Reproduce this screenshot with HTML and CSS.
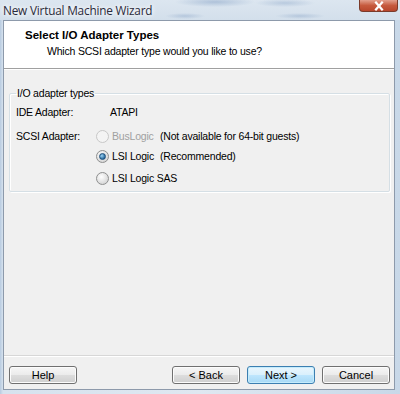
FILE: index.html
```
<!DOCTYPE html>
<html lang="en">
<head>
    <meta charset="UTF-8">
    <title>New Virtual Machine Wizard</title>
    <link rel="stylesheet" href="styles.css">
</head>
<body>
    <div class="window">
        <div class="titlebar">
            <span class="title">New Virtual Machine Wizard</span>
            <span class="close-btn">
                <svg width="14" height="10" viewBox="0 0 14 10">
                    <path d="M4 1.5 L10 8.5 M10 1.5 L4 8.5" stroke="#fff" stroke-width="2.2" stroke-linecap="square"/>
                </svg>
            </span>
        </div>

        <div class="client">
            <div class="header">
                <div class="header-title">Select I/O Adapter Types</div>
                <div class="header-sub">Which SCSI adapter type would you like to use?</div>
            </div>

            <fieldset class="group">
                <legend>I/O adapter types</legend>
                <div class="row">
                    <span class="label">IDE Adapter:</span>
                    <span>ATAPI</span>
                </div>
                <div class="row">
                    <span class="label">SCSI Adapter:</span>
                    <div class="options">
                        <div class="option disabled">
                            <span class="radio"></span>
                            <span class="opt-name">BusLogic</span>
                            <span class="note">(Not available for 64-bit guests)</span>
                        </div>
                        <div class="option">
                            <span class="radio checked"></span>
                            <span class="opt-name">LSI Logic</span>
                            <span class="note">(Recommended)</span>
                        </div>
                        <div class="option">
                            <span class="radio"></span>
                            <span class="opt-name">LSI Logic SAS</span>
                        </div>
                    </div>
                </div>
            </fieldset>

            <div class="spacer"></div>

            <div class="footer">
                <button class="btn">Help</button>
                <div class="footer-right">
                    <button class="btn">&lt; Back</button>
                    <button class="btn default">Next &gt;</button>
                    <button class="btn">Cancel</button>
                </div>
            </div>
        </div>
    </div>
</body>
</html>
```
FILE: styles.css
```
body {
    margin: 0;
    background: #c9d8e8;
    font-family: "Liberation Sans", Arial, sans-serif;
    font-size: 10.5px;
    letter-spacing: -0.2px;
    color: #000;
}

.window {
    width: 400px;
    height: 394px;
    display: flex;
    flex-direction: column;
    background: linear-gradient(to right, #b8cbe0 0px, #d6e2ee 3px, #dfe8f1 50%, #c8d8e8 100%);
}

.titlebar {
    height: 20px;
    display: flex;
    justify-content: space-between;
    align-items: flex-start;
    background:
        radial-gradient(ellipse 40px 5px at 215px 2px, rgba(120, 150, 190, 0.45), transparent),
        radial-gradient(ellipse 30px 4px at 285px 3px, rgba(120, 150, 190, 0.35), transparent),
        radial-gradient(ellipse 20px 3px at 185px 16px, rgba(120, 150, 190, 0.35), transparent),
        radial-gradient(ellipse 25px 3px at 300px 16px, rgba(120, 150, 190, 0.35), transparent),
        linear-gradient(to bottom, #dce6f0, #d3dfeb);
}
.title {
    font-family: "Open Sans", "Noto Sans", sans-serif;
    font-size: 11.8px;
    color: #2a2a3a;
    padding: 1px 0 0 3px;
    line-height: 18px;
    text-shadow: 0 0 6px #fff, 0 0 4px #fff;
}
.close-btn {
    width: 37px;
    height: 11px;
    margin-right: 2px;
    background: linear-gradient(to bottom, #e3a08e, #c65a3e 50%, #b8462c);
    border: 1px solid #7a3a2a;
    border-top: none;
    border-radius: 0 0 4px 4px;
    display: flex;
    justify-content: center;
    align-items: center;
}

.client {
    flex: 1;
    margin: 0 5px 4px 3px;
    background: #f0f0f0;
    border: 1px solid #8d9aab;
    display: flex;
    flex-direction: column;
}

.header {
    background: #fff;
    height: 48px;
    border-bottom: 1px solid #a0a0a0;
    box-shadow: 0 1px 0 #fff;
    padding: 7px 0 0 21px;
    box-sizing: border-box;
}
.header-title {
    font-weight: bold;
    font-size: 11.5px;
    letter-spacing: 0;
    line-height: 14px;
}
.header-sub {
    padding-left: 22px;
    margin-top: 2px;
    line-height: 14px;
}

.group {
    margin: 18px 4px 0 5px;
    padding: 6px 6px 6px 6px;
    border: 1px solid #d5dfe5;
    box-shadow: inset 1px 1px 0 #fff, 1px 1px 0 #fff;
    border-radius: 2px;
}
.group legend {
    padding: 0 1px;
    margin-left: 0;
}

.row {
    display: flex;
    line-height: 14px;
    white-space: nowrap;
}
.row + .row {
    margin-top: 10px;
}
.label {
    width: 94px;
    flex-shrink: 0;
}

.options {
    display: flex;
    flex-direction: column;
    gap: 6px;
    margin-left: -14px;
}
.option {
    display: flex;
    align-items: center;
    height: 14px;
}
.option + .option + .option {
    margin-top: 2px;
}
.opt-name {
    min-width: 48px;
    margin-left: 3px;
}
.option.disabled .opt-name {
    color: #a0a0a0;
}

.radio {
    width: 11px;
    height: 11px;
    flex-shrink: 0;
    border-radius: 50%;
    border: 1px solid #8e8f8f;
    background: radial-gradient(circle at 40% 35%, #fff, #d4d4d4 80%);
    display: flex;
    justify-content: center;
    align-items: center;
}
.radio.checked::after {
    content: "";
    width: 5px;
    height: 5px;
    border-radius: 50%;
    background: radial-gradient(circle at 35% 35%, #9ad2f5, #1a5c90 80%);
    border: 1px solid #1d4f7c;
}
.option.disabled .radio {
    border-color: #c8c8c8;
    background: #f4f4f4;
}

.spacer {
    flex: 1;
}

.footer {
    border-top: 1px solid #d7d7d7;
    box-shadow: inset 0 1px 0 #fff;
    padding: 10px 4px 5px 5px;
    display: flex;
    justify-content: space-between;
}
.footer-right {
    display: flex;
    gap: 7px;
}
.btn {
    width: 68px;
    height: 18px;
    font-family: "Liberation Sans", Arial, sans-serif;
    font-size: 11px;
    padding: 0;
    border: 1px solid #707070;
    border-radius: 3px;
    background: linear-gradient(to bottom, #f6f6f6, #ebebeb 50%, #dddddd 51%, #cfcfcf);
    box-shadow: inset 0 0 0 1px #fcfcfc;
    color: #000;
}
.btn.default {
    border-color: #3c7fb1;
    background: linear-gradient(to bottom, #eaf6fd, #d9f0fc 50%, #bee6fd 51%, #a7d9f5);
    box-shadow: inset 0 0 0 1px #c5ecfc;
}
```
